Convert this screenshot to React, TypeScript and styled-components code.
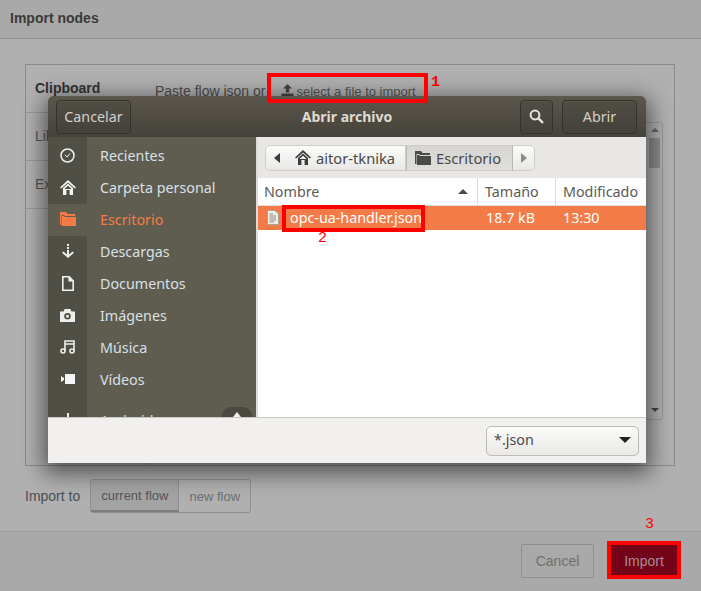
import React, { FC, ReactNode } from "react";
import styled, { createGlobalStyle } from "styled-components";

const GlobalStyle = createGlobalStyle`
  html, body {
    margin: 0;
    padding: 0;
    background: #b0b0b0;
  }
  * {
    box-sizing: border-box;
  }
`;

const HomeIcon: FC<{ color: string }> = ({ color }) => (
  <svg width="16" height="15" viewBox="0 0 16 15">
    <path d="M8 0 L16 7.4 L14.8 8.6 L8 2.4 L1.2 8.6 L0 7.4 Z" fill={color} />
    <path d="M3 8 L8 3.6 L13 8 V15 H9.6 V10 H6.4 V15 H3 Z M4.6 8.8 V9 H11.4 V8.8 L8 5.8 Z" fill={color} fillRule="evenodd" />
  </svg>
);

const FolderIcon: FC<{ color: string }> = ({ color }) => (
  <svg width="16" height="14" viewBox="0 0 16 14">
    <path d="M0 0 H6 L7.5 2 H15 V4 H5 L4 3 H1.5 V13 H0 Z" fill={color} />
    <path d="M2 4 H4 L5 5 H16 V14 H2 Z" fill={color} />
  </svg>
);

const sidebarIcons: Record<string, ReactNode> = {
  clock: (
    <svg width="15" height="15" viewBox="0 0 15 15" fill="none" stroke="#eeeeec">
      <circle cx="7.5" cy="7.5" r="6.5" strokeWidth="1.6" />
      <path d="M4.8 7 L7.2 9 L10 5.4" strokeWidth="1" />
    </svg>
  ),
  home: <HomeIcon color="#f4f4f2" />,
  folder: <FolderIcon color="#f37b48" />,
  download: (
    <svg width="14" height="15" viewBox="0 0 14 15" fill="#eeeeec">
      <rect x="6" y="0" width="2" height="2" />
      <rect x="6" y="3" width="2" height="2" />
      <path d="M6 6 H8 V10.4 L11.6 7.6 L13 8.8 L7 14 L1 8.8 L2.4 7.6 L6 10.4 Z" />
    </svg>
  ),
  document: (
    <svg width="12" height="15" viewBox="0 0 12 15">
      <path d="M0 0 H7.5 L12 4.5 V15 H0 Z M1.6 1.6 V13.4 H10.4 V5.6 H6.4 V1.6 Z" fill="#f2f2f0" fillRule="evenodd" />
    </svg>
  ),
  camera: (
    <svg width="15" height="13" viewBox="0 0 15 13">
      <path d="M0 2.5 H3.6 L4.6 0 H10.4 L11.4 2.5 H15 V13 H0 Z M7.5 3.9 A3.3 3.3 0 1 0 7.5 10.5 A3.3 3.3 0 1 0 7.5 3.9 Z M7.5 5.7 A1.5 1.5 0 1 1 7.5 8.7 A1.5 1.5 0 1 1 7.5 5.7 Z" fill="#eeeeec" fillRule="evenodd" />
    </svg>
  ),
  music: (
    <svg width="15" height="14" viewBox="0 0 15 14" fill="none" stroke="#eeeeec" strokeWidth="1.6">
      <circle cx="3" cy="11" r="2" />
      <circle cx="12" cy="11" r="2" />
      <path d="M5 11 V1 H14 V11 M5 4 H14" />
    </svg>
  ),
  video: (
    <svg width="14" height="10" viewBox="0 0 14 10" fill="#f4f4f2">
      <rect x="4" y="0" width="10" height="10" />
      <path d="M0 2 L3 4 V6 L0 8 Z" />
    </svg>
  ),
  usb: (
    <svg width="8" height="15" viewBox="0 0 8 15" fill="#eeeeec">
      <rect x="3" y="0" width="2" height="15" />
      <rect x="0" y="8" width="8" height="2" />
    </svg>
  ),
};

const places = [
  { label: "Recientes", icon: "clock" },
  { label: "Carpeta personal", icon: "home" },
  { label: "Escritorio", icon: "folder", active: true },
  { label: "Descargas", icon: "download" },
  { label: "Documentos", icon: "document" },
  { label: "Imágenes", icon: "camera" },
  { label: "Música", icon: "music" },
  { label: "Vídeos", icon: "video" },
];

export default function App() {
  return (
    <Page>
      <GlobalStyle />
      <Header>Import nodes</Header>

      <Body>
        <ImportBox>
          <Tabs>
            <Tab $active>Clipboard</Tab>
            <Tab>Library</Tab>
            <Tab>Export</Tab>
          </Tabs>
          <ClipboardPane>
            <PasteLine>
              <span>Paste flow json or</span>
              <SelectFile>
                <UploadIcon width="13" height="12" viewBox="0 0 13 12" fill="#444">
                  <path d="M6.5 0 L11 4.6 H8.2 V8.4 H4.8 V4.6 H2 Z" />
                  <rect x="0.5" y="9.6" width="12" height="2.4" />
                </UploadIcon>
                select a file to import
              </SelectFile>
            </PasteLine>
            <JsonArea>
              <ScrollTrack>
                <ScrollArrow $up />
                <ScrollThumb />
                <ScrollArrow />
              </ScrollTrack>
            </JsonArea>
          </ClipboardPane>
        </ImportBox>

        <ImportTo>
          <ImportLabel>Import to</ImportLabel>
          <ToggleGroup>
            <Toggle $selected>current flow</Toggle>
            <Toggle>new flow</Toggle>
          </ToggleGroup>
        </ImportTo>
      </Body>

      <Footer>
        <CancelButton>Cancel</CancelButton>
        <ImportButton>Import</ImportButton>
      </Footer>

      <FileDialog>
        <DialogBar>
          <DarkButton $width={75}>Cancelar</DarkButton>
          <DialogTitle>Abrir archivo</DialogTitle>
          <DarkButton $width={33}>
            <svg width="15" height="15" viewBox="0 0 15 15" fill="none" stroke="#e6e5e1">
              <circle cx="6" cy="6" r="4.4" strokeWidth="2" />
              <path d="M9.4 9.4 L14 14" strokeWidth="2.4" />
            </svg>
          </DarkButton>
          <DarkButton $width={75}>Abrir</DarkButton>
        </DialogBar>

        <DialogMain>
          <Sidebar>
            {places.map((place) => (
              <Place key={place.label} $active={place.active}>
                <PlaceIcon>{sidebarIcons[place.icon]}</PlaceIcon>
                {place.label}
              </Place>
            ))}
            <Place $gap>
              <PlaceIcon>{sidebarIcons.usb}</PlaceIcon>
              Android
              <EjectButton>
                <svg width="8" height="6" viewBox="0 0 8 6" fill="#eeeeec">
                  <path d="M4 0 L8 5 H0 Z" />
                </svg>
              </EjectButton>
            </Place>
          </Sidebar>

          <FilePane>
            <PathBar>
              <PathArrow $side="left">
                <svg width="6" height="10" viewBox="0 0 6 10" fill="#3c3c3c">
                  <path d="M6 0 V10 L0 5 Z" />
                </svg>
              </PathArrow>
              <PathCrumb $width={119}>
                <HomeIcon color="#3c3c3c" />
                aitor-tknika
              </PathCrumb>
              <PathCrumb $width={107} $pressed>
                <FolderIcon color="#4a4a48" />
                Escritorio
              </PathCrumb>
              <PathArrow $side="right">
                <svg width="6" height="10" viewBox="0 0 6 10" fill="#8c8c8a">
                  <path d="M0 0 V10 L6 5 Z" />
                </svg>
              </PathArrow>
            </PathBar>

            <ColumnHeads>
              <ColumnHead $width={220}>
                Nombre
                <svg width="10" height="5" viewBox="0 0 10 5" fill="#4c4c4a">
                  <path d="M5 0 L10 5 H0 Z" />
                </svg>
              </ColumnHead>
              <ColumnHead $width={78}>Tamaño</ColumnHead>
              <ColumnHead $width={90} $last>Modificado</ColumnHead>
            </ColumnHeads>

            <FileRow>
              <FileName>
                <svg width="12" height="15" viewBox="0 0 12 15">
                  <path d="M0.5 0.5 H8 L11.5 4 V14.5 H0.5 Z" fill="#f2efe9" stroke="#a9a59d" />
                  <path d="M2.5 4 H6 M2.5 6 H9 M2.5 8 H9 M2.5 10 H9 M2.5 12 H7" stroke="#8e8c86" />
                </svg>
                opc-ua-handler.json
              </FileName>
              <FileSize>18.7 kB</FileSize>
              <FileTime>13:30</FileTime>
            </FileRow>
          </FilePane>
        </DialogMain>

        <DialogFilter>
          <FilterSelect>
            *.json
            <svg width="12" height="6" viewBox="0 0 12 6" fill="#222">
              <path d="M0 0 H12 L6 6 Z" />
            </svg>
          </FilterSelect>
        </DialogFilter>
      </FileDialog>

      <Callout $left={267} $top={73} $width={161} $height={30} />
      <CalloutNumber $left={431} $top={75} $bold>1</CalloutNumber>
      <Callout $left={282} $top={205} $width={143} $height={27} />
      <CalloutNumber $left={318} $top={231}>2</CalloutNumber>
      <Callout $left={607} $top={541} $width={74} $height={38} />
      <CalloutNumber $left={645} $top={517}>3</CalloutNumber>
    </Page>
  );
}

const Page = styled.div`
  position: relative;
  width: 701px;
  height: 591px;
  display: flex;
  flex-direction: column;
  overflow: hidden;
  background: #b0b0b0;
  font-family: "Liberation Sans", Arial, sans-serif;
  color: #444;
`;

const Header = styled.header`
  height: 39px;
  padding: 10px 10px 0;
  background: #a9a9a9;
  border-bottom: 1px solid #8f8f8f;
  font-size: 14px;
  font-weight: bold;
  color: #3a3a3a;
`;

const Body = styled.main`
  height: 492px;
  padding: 25px 26px 0 25px;
  display: flex;
  flex-direction: column;
  gap: 13px;
`;

const ImportBox = styled.section`
  height: 402px;
  display: flex;
  border: 1px solid #8a8a8a;
`;

const Tabs = styled.div`
  width: 120px;
  border-right: 1px solid #8a8a8a;
`;

const Tab = styled.div<{ $active?: boolean }>`
  height: 48px;
  padding: 15px 9px 0;
  border-bottom: 1px solid #9a9a9a;
  font-size: 14px;
  font-weight: ${(p) => (p.$active ? "bold" : "normal")};
  color: ${(p) => (p.$active ? "#333" : "#555")};
  ${(p) => (p.$active ? "margin-right: -1px; background: #b0b0b0;" : "")}
`;

const ClipboardPane = styled.div`
  flex: 1;
  padding: 9px 11px 0 9px;
  display: flex;
  flex-direction: column;
`;

const PasteLine = styled.div`
  height: 48px;
  display: flex;
  align-items: flex-start;
  padding-top: 9px;
  gap: 15px;
  font-size: 14px;
  color: #4c4c4c;
`;

const SelectFile = styled.span`
  display: inline-flex;
  align-items: center;
  gap: 3px;
  padding-top: 1px;
  font-size: 13px;
  color: #555;
`;

const UploadIcon = styled.svg`
  flex-shrink: 0;
  margin-top: -3px;
`;

const JsonArea = styled.div`
  height: 298px;
  display: flex;
  justify-content: flex-end;
  border: 1px solid #999;
  border-radius: 3px;
`;

const ScrollTrack = styled.div`
  width: 13px;
  margin-right: 1px;
  display: flex;
  flex-direction: column;
  align-items: center;
  padding-top: 5px;
`;

const ScrollArrow = styled.div<{ $up?: boolean }>`
  width: 0;
  height: 0;
  border-left: 4px solid transparent;
  border-right: 4px solid transparent;
  ${(p) => (p.$up ? "border-bottom: 4px solid #666;" : "border-top: 4px solid #444; margin-top: 240px;")}
`;

const ScrollThumb = styled.div`
  width: 11px;
  height: 30px;
  margin-top: 6px;
  background: #8c8c8c;
`;

const ImportTo = styled.div`
  display: flex;
  align-items: center;
  gap: 10px;
`;

const ImportLabel = styled.span`
  font-size: 14px;
  color: #4c4f55;
`;

const ToggleGroup = styled.div`
  display: flex;
  height: 34px;
  border: 1px solid #8f8f8f;
  border-radius: 3px;
`;

const Toggle = styled.div<{ $selected?: boolean }>`
  display: flex;
  align-items: center;
  padding: 0 10px;
  font-size: 13px;
  color: ${(p) => (p.$selected ? "#555" : "#6e6e6e")};
  background: ${(p) => (p.$selected ? "#a3a3a3" : "transparent")};
  ${(p) => (p.$selected ? "border-right: 1px solid #8f8f8f; border-bottom: 2px solid #7d7d7d;" : "")}
`;

const Footer = styled.footer`
  flex: 1;
  display: flex;
  justify-content: flex-end;
  align-items: center;
  gap: 13px;
  padding: 0 20px 1px 0;
  background: #a9a9a9;
  border-top: 1px solid #9a9a9a;
`;

const CancelButton = styled.div`
  width: 73px;
  height: 34px;
  display: flex;
  align-items: center;
  justify-content: center;
  border: 1px solid #8f8f8f;
  border-radius: 2px;
  font-size: 14px;
  color: #6f6f6f;
`;

const ImportButton = styled.div`
  width: 74px;
  height: 34px;
  display: flex;
  align-items: center;
  justify-content: center;
  background: #720319;
  font-size: 14px;
  color: #a98a94;
`;

const FileDialog = styled.div`
  position: absolute;
  left: 48px;
  top: 96px;
  width: 598px;
  height: 367px;
  display: flex;
  flex-direction: column;
  border-radius: 5px 5px 0 0;
  box-shadow: 0 6px 22px 4px rgba(0, 0, 0, 0.55);
  font-family: "Noto Sans", "Open Sans", sans-serif;
  font-size: 14.3px;
  background: #f1f0ee;
`;

const DialogBar = styled.div`
  height: 41px;
  display: flex;
  align-items: center;
  padding: 0 9px 0 8px;
  gap: 9px;
  border-radius: 5px 5px 0 0;
  background: linear-gradient(#5c574d, #45423b);
`;

const DialogTitle = styled.div`
  flex: 1;
  padding-left: 43px;
  text-align: center;
  font-size: 14px;
  font-weight: bold;
  color: #dfdbd2;
`;

const DarkButton = styled.div<{ $width: number }>`
  width: ${(p) => p.$width}px;
  height: 34px;
  display: flex;
  align-items: center;
  justify-content: center;
  border: 1px solid #34322c;
  border-radius: 4px;
  background: linear-gradient(#504d45, #45423b);
  box-shadow: inset 0 1px 0 rgba(255, 255, 255, 0.05);
  color: #d3d0c8;
`;

const DialogMain = styled.div`
  height: 280px;
  display: flex;
  background: #fff;
`;

const Sidebar = styled.nav`
  width: 210px;
  padding-top: 3px;
  overflow: hidden;
  background: linear-gradient(to right, #504f45 39px, #5f5c50 39px);
  border-right: 2px solid #dcdbd7;
`;

const Place = styled.div<{ $active?: boolean; $gap?: boolean }>`
  height: 32px;
  padding-bottom: 2px;
  display: flex;
  align-items: center;
  margin-top: ${(p) => (p.$gap ? "9px" : "0")};
  background: ${(p) => (p.$active ? "#5f5c50" : "transparent")};
  color: ${(p) => (p.$active ? "#f37b48" : "#d8e0e6")};
`;

const PlaceIcon = styled.span`
  width: 39px;
  margin-right: 13px;
  display: flex;
  justify-content: center;
`;

const EjectButton = styled.span`
  width: 30px;
  height: 26px;
  margin-left: auto;
  margin-right: 4px;
  display: flex;
  justify-content: center;
  padding-top: 5px;
  border-radius: 9px;
  background: #4a483f;
`;

const FilePane = styled.div`
  flex: 1;
`;

const PathBar = styled.div`
  height: 41px;
  display: flex;
  align-items: center;
  padding-left: 7px;
  background: #e8e7e5;
`;

const PathArrow = styled.div<{ $side: "left" | "right" }>`
  width: 22px;
  height: 26px;
  display: flex;
  align-items: center;
  justify-content: center;
  border: 1px solid #cfcdc9;
  ${(p) => (p.$side === "left" ? "border-radius: 5px 0 0 5px; border-right: none;" : "border-radius: 0 5px 5px 0; border-left: none;")}
  background: linear-gradient(#fbfbfa, #e9e8e6);
`;

const PathCrumb = styled.div<{ $width: number; $pressed?: boolean }>`
  width: ${(p) => p.$width}px;
  height: 26px;
  display: flex;
  align-items: center;
  gap: 5px;
  padding-left: 8px;
  border: 1px solid #cfcdc9;
  border-left: ${(p) => (p.$pressed ? "1px solid #b9b7b3" : "none")};
  ${(p) => (p.$pressed ? "border-right: 1px solid #b9b7b3;" : "")}
  background: ${(p) => (p.$pressed ? "linear-gradient(#d6d5d2, #dfdedb)" : "linear-gradient(#fbfbfa, #e9e8e6)")};
  font-size: 14.7px;
  color: #4a4a48;
`;

const ColumnHeads = styled.div`
  height: 28px;
  display: flex;
  border-bottom: 1px solid #dddcd9;
`;

const ColumnHead = styled.div<{ $width: number; $last?: boolean }>`
  width: ${(p) => p.$width}px;
  display: flex;
  align-items: center;
  justify-content: space-between;
  padding: 0 9px 0 7px;
  ${(p) => (p.$last ? "" : "border-right: 1px solid #dddcd9;")}
  color: #5a5a58;
  white-space: nowrap;

  &:first-child {
    padding-left: 6px;
  }
`;

const FileRow = styled.div`
  height: 24px;
  padding-bottom: 2px;
  display: flex;
  align-items: center;
  background: #f37b48;
  color: #fff;
`;

const FileName = styled.div`
  width: 228px;
  display: flex;
  align-items: center;
  gap: 11px;
  padding-left: 9px;
`;

const FileSize = styled.div`
  width: 77px;
`;

const FileTime = styled.div``;

const DialogFilter = styled.div`
  flex: 1;
  display: flex;
  align-items: center;
  justify-content: flex-end;
  padding-right: 7px;
  border-top: 1px solid #c9c7c3;
`;

const FilterSelect = styled.div`
  width: 153px;
  height: 30px;
  padding: 0 7px 2px;
  display: flex;
  align-items: center;
  justify-content: space-between;
  border: 1px solid #bdbbb7;
  border-radius: 5px;
  background: linear-gradient(#fbfbfa, #e9e8e6);
  font-size: 14.3px;
  color: #4a4a48;
`;

const Callout = styled.div<{ $left: number; $top: number; $width: number; $height: number }>`
  position: absolute;
  left: ${(p) => p.$left}px;
  top: ${(p) => p.$top}px;
  width: ${(p) => p.$width}px;
  height: ${(p) => p.$height}px;
  border: 4px solid #ff0000;
`;

const CalloutNumber = styled.span<{ $left: number; $top: number; $bold?: boolean }>`
  position: absolute;
  left: ${(p) => p.$left}px;
  top: ${(p) => p.$top}px;
  font-family: "Liberation Mono", monospace;
  font-size: 15px;
  font-weight: ${(p) => (p.$bold ? "bold" : "normal")};
  line-height: 16px;
  color: #ff0000;
`;
